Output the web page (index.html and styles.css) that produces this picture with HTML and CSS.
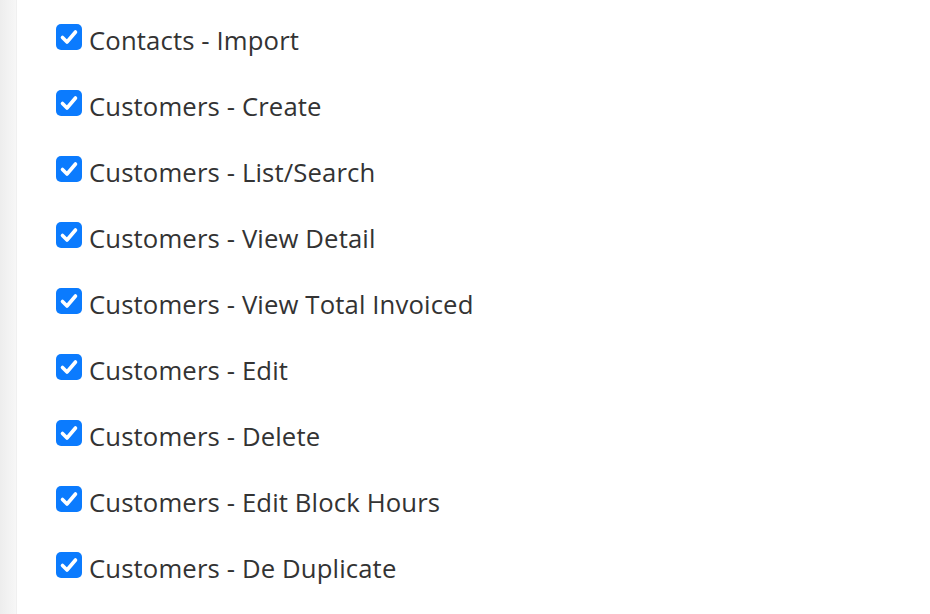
FILE: index.html
```html
<!DOCTYPE html>
<html>
<head>
<meta charset="utf-8">
<link rel="stylesheet" href="styles.css">
</head>
<body>
<div class="page">
  <div class="edge"></div>
  <ul class="perms">
    <li class="perm"><span class="box"><svg viewBox="0 0 26 26"><path d="M6.5 13.5 L11 18 L19.5 8" /></svg></span><span class="label">Contacts - Import</span></li>
    <li class="perm"><span class="box"><svg viewBox="0 0 26 26"><path d="M6.5 13.5 L11 18 L19.5 8" /></svg></span><span class="label">Customers - Create</span></li>
    <li class="perm"><span class="box"><svg viewBox="0 0 26 26"><path d="M6.5 13.5 L11 18 L19.5 8" /></svg></span><span class="label">Customers - List/Search</span></li>
    <li class="perm"><span class="box"><svg viewBox="0 0 26 26"><path d="M6.5 13.5 L11 18 L19.5 8" /></svg></span><span class="label">Customers - View Detail</span></li>
    <li class="perm"><span class="box"><svg viewBox="0 0 26 26"><path d="M6.5 13.5 L11 18 L19.5 8" /></svg></span><span class="label">Customers - View Total Invoiced</span></li>
    <li class="perm"><span class="box"><svg viewBox="0 0 26 26"><path d="M6.5 13.5 L11 18 L19.5 8" /></svg></span><span class="label">Customers - Edit</span></li>
    <li class="perm"><span class="box"><svg viewBox="0 0 26 26"><path d="M6.5 13.5 L11 18 L19.5 8" /></svg></span><span class="label">Customers - Delete</span></li>
    <li class="perm"><span class="box"><svg viewBox="0 0 26 26"><path d="M6.5 13.5 L11 18 L19.5 8" /></svg></span><span class="label">Customers - Edit Block Hours</span></li>
    <li class="perm"><span class="box"><svg viewBox="0 0 26 26"><path d="M6.5 13.5 L11 18 L19.5 8" /></svg></span><span class="label">Customers - De Duplicate</span></li>
  </ul>
</div>
</body>
</html>
```
FILE: styles.css
```css
html, body {
  margin: 0;
  padding: 0;
  background: #fff;
  height: 100%;
  overflow: hidden;
}
.page {
  display: flex;
  height: 614px;
  font-family: "Open Sans", "Noto Sans", sans-serif;
}
.edge {
  width: 16px;
  flex: none;
  background: linear-gradient(to right, #ededed, #f7f7f7);
  border-right: 1px solid #f0f0f0;
}
.perms {
  list-style: none;
  margin: 0;
  padding: 7px 0 0 39px;
}
.perm {
  display: flex;
  align-items: center;
  height: 66px;
}
.box {
  width: 26px;
  height: 26px;
  border-radius: 5px;
  background: #0b7bfe;
  display: flex;
  flex: none;
  margin-top: -6px;
}
.box svg {
  width: 26px;
  height: 26px;
}
.box path {
  fill: none;
  stroke: #fff;
  stroke-width: 3.6;
  stroke-linecap: round;
  stroke-linejoin: round;
}
.label {
  margin-left: 7px;
  font-size: 25.7px;
  letter-spacing: 0.13px;
  color: #333;
}
```
